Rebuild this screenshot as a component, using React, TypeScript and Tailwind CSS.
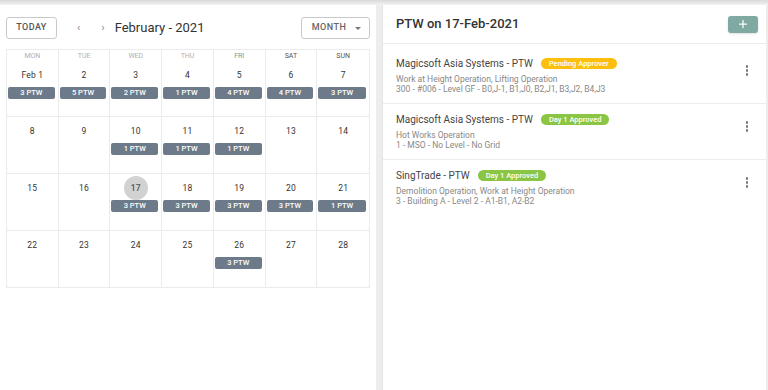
import React from 'react';
import { Plus } from 'lucide-react';

type Day = { label: string; ptw?: number; today?: boolean };

const dayNames = ['MON', 'TUE', 'WED', 'THU', 'FRI', 'SAT', 'SUN'];

const weeks: Day[][] = [
    [
        { label: 'Feb 1', ptw: 3 },
        { label: '2', ptw: 5 },
        { label: '3', ptw: 2 },
        { label: '4', ptw: 1 },
        { label: '5', ptw: 4 },
        { label: '6', ptw: 4 },
        { label: '7', ptw: 3 },
    ],
    [
        { label: '8' },
        { label: '9' },
        { label: '10', ptw: 1 },
        { label: '11', ptw: 1 },
        { label: '12', ptw: 1 },
        { label: '13' },
        { label: '14' },
    ],
    [
        { label: '15' },
        { label: '16' },
        { label: '17', ptw: 3, today: true },
        { label: '18', ptw: 3 },
        { label: '19', ptw: 3 },
        { label: '20', ptw: 3 },
        { label: '21', ptw: 1 },
    ],
    [
        { label: '22' },
        { label: '23' },
        { label: '24' },
        { label: '25' },
        { label: '26', ptw: 3 },
        { label: '27' },
        { label: '28' },
    ],
];

const permits = [
    {
        title: 'Magicsoft Asia Systems - PTW',
        status: 'Pending Approver',
        badge: 'bg-[#fcbf0c]',
        work: 'Work at Height Operation, Lifting Operation',
        place: '300 - #006 - Level GF - B0,J-1, B1,J0, B2,J1, B3,J2, B4,J3',
    },
    {
        title: 'Magicsoft Asia Systems - PTW',
        status: 'Day 1 Approved',
        badge: 'bg-[#8ac644]',
        work: 'Hot Works Operation',
        place: '1 - MSO - No Level - No Grid',
    },
    {
        title: 'SingTrade - PTW',
        status: 'Day 1 Approved',
        badge: 'bg-[#8ac644]',
        work: 'Demolition Operation, Work at Height Operation',
        place: '3 - Building A - Level 2 - A1-B1, A2-B2',
    },
];

const dayNameColor = (i: number) => {
    if (i === 4) return 'text-[#5ea79d]';
    if (i >= 5) return 'text-[#555]';
    return 'text-[#b0b0b0]';
};

// --- Calendar cell ---
const DayCell: React.FC<{ day: Day; index: number; first: boolean }> = ({ day, index, first }) => (
    <div className={`flex flex-col ${index < 6 ? 'border-r border-[#ebebeb]' : ''} ${first ? 'h-[66px] pt-[1px]' : 'h-[56px] pt-[9px]'}`}>
        {first && (
            <div className={`h-[10px] leading-[10px] text-center text-[7px] mb-[9px] ${dayNameColor(index)}`}>
                {dayNames[index]}
            </div>
        )}
        <div className="h-[10px] flex items-center justify-center">
            {day.today ? (
                <span className="-my-[7px] w-6 h-6 rounded-full bg-[#d2d2d2] flex items-center justify-center text-[8.5px] font-medium text-[#555] tracking-wide">
                    {day.label}
                </span>
            ) : (
                <span className="text-[8.5px] text-[#333] tracking-wide">{day.label}</span>
            )}
        </div>
        {day.ptw && (
            <div className="mt-[7px] ml-[1px] mr-[3px] h-[12px] rounded-[2px] bg-[#6c7a89] text-white text-[7.5px] font-medium leading-[12px] text-center">
                {day.ptw} PTW
            </div>
        )}
    </div>
);

const Kebab = () => (
    <div className="flex flex-col gap-[1.5px] mt-[9px]">
        <span className="w-[2.5px] h-[2.5px] rounded-full bg-[#777]" />
        <span className="w-[2.5px] h-[2.5px] rounded-full bg-[#777]" />
        <span className="w-[2.5px] h-[2.5px] rounded-full bg-[#777]" />
    </div>
);

export default function App() {
    return (
        <div className="w-[768px] h-[390px] overflow-hidden flex flex-col bg-[#ededed]" style={{ fontFamily: 'Roboto, "Noto Sans", sans-serif' }}>
            {/* top shadow */}
            <div className="h-[5px] bg-gradient-to-b from-[#d9d9d9] to-[#f3f3f3]" />

            <div className="flex flex-1 min-h-0">
                {/* Calendar */}
                <div className="w-[376px] bg-white px-[6px] pt-[12px]">
                    <div className="flex items-center h-[22px]">
                        <button className="w-[51px] h-[22px] border border-[#c9c9c9] rounded-[3px] text-[9px] font-medium text-[#555] tracking-wider">
                            TODAY
                        </button>
                        <span className="ml-[20px] text-[11px] text-[#888]">‹</span>
                        <span className="ml-[21px] text-[11px] text-[#888]">›</span>
                        <span className="ml-[10px] text-[13px] text-[#333]">February - 2021</span>
                        <button className="ml-auto w-[69px] h-[22px] border border-[#c9c9c9] rounded-[3px] text-[9px] font-medium text-[#666] tracking-wider flex items-center justify-center gap-[9px] pl-[2px]">
                            MONTH
                            <span className="w-0 h-0 border-l-[3px] border-r-[3px] border-t-[3px] border-l-transparent border-r-transparent border-t-[#777]" />
                        </button>
                    </div>

                    <div className="mt-[10px] w-[364px] border border-[#ebebeb]">
                        {weeks.map((week, w) => (
                            <div key={w} className={`grid grid-cols-7 ${w < weeks.length - 1 ? 'border-b border-[#ebebeb]' : ''}`}>
                                {week.map((day, i) => (
                                    <DayCell key={i} day={day} index={i} first={w === 0} />
                                ))}
                            </div>
                        ))}
                    </div>
                </div>

                {/* PTW list */}
                <div className="ml-[6px] w-[384px] bg-white border-l border-[#e4e4e4]">
                    <div className="h-[39px] flex items-center justify-between pl-[13px] pr-[8px] border-b border-[#ececec]">
                        <h3 className="text-[13px] font-medium text-[#333]">PTW on 17-Feb-2021</h3>
                        <button className="w-[30px] h-[17px] rounded-[3px] bg-[#7fa9a3] shadow-sm flex items-center justify-center">
                            <Plus className="w-[12px] h-[12px] text-white" strokeWidth={2.5} />
                        </button>
                    </div>

                    <div className="pt-[4px]">
                        {permits.map((p, i) => (
                            <div key={i} className={`flex items-start pl-[13px] pr-[18px] pt-[8px] pb-[9px] ${i < permits.length - 1 ? 'border-b border-[#ececec]' : ''}`}>
                                <div className="flex-1">
                                    <div className="flex items-center h-[14px]">
                                        <span className="text-[10px] text-[#444]">{p.title}</span>
                                        <span className={`ml-[8px] px-[8px] h-[11px] rounded-full ${p.badge} text-white text-[7.5px] font-medium leading-[11px]`}>
                                            {p.status}
                                        </span>
                                    </div>
                                    <div className="mt-[4px] text-[8.5px] leading-[10px] text-[#888]">{p.work}</div>
                                    <div className="text-[8.5px] leading-[10px] text-[#888]">{p.place}</div>
                                </div>
                                <Kebab />
                            </div>
                        ))}
                    </div>
                </div>
            </div>
        </div>
    );
}
